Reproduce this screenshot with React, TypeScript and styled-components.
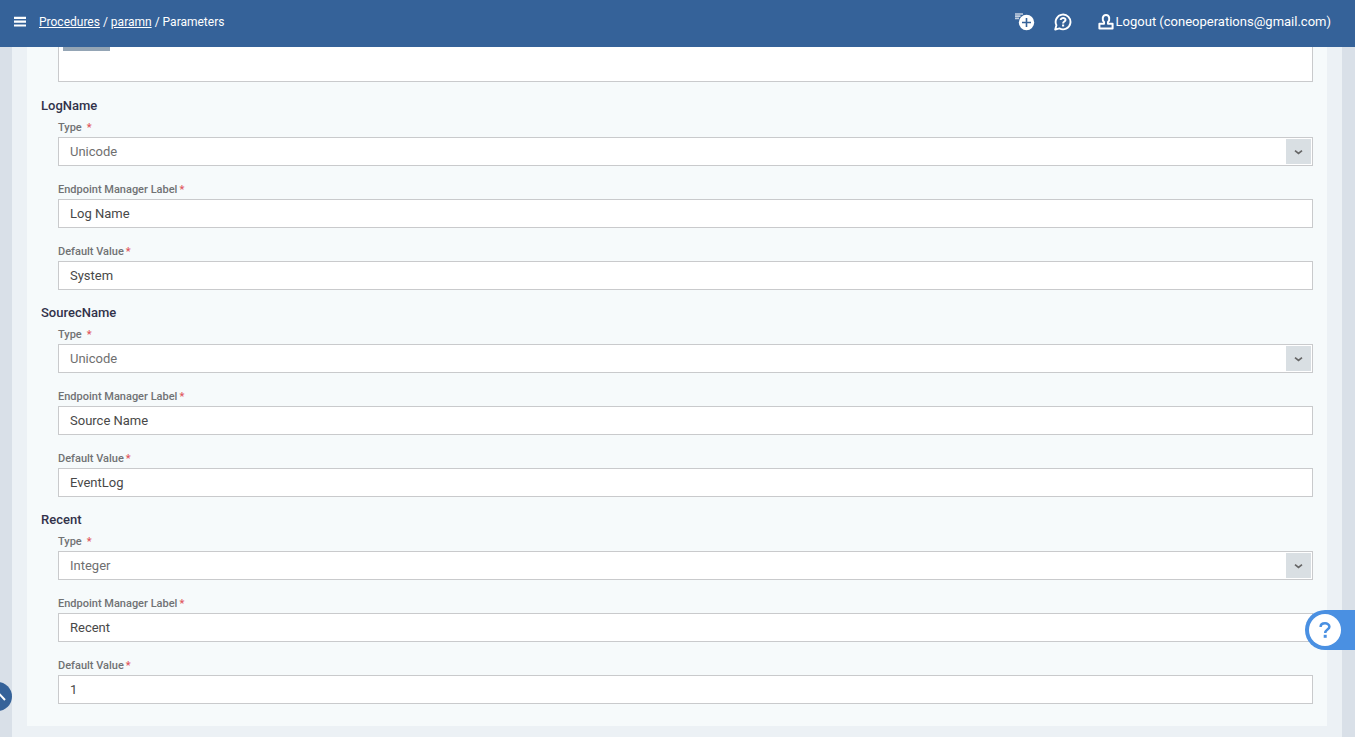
import React from "react";
import styled, { createGlobalStyle } from "styled-components";

const GlobalStyle = createGlobalStyle`
  * { box-sizing: border-box; }
  html, body { margin: 0; padding: 0; }
  body {
    background: #d9e0e8;
    font-family: Roboto, "Liberation Sans", sans-serif;
    font-size: 13px;
    color: #555;
  }
`;

const Page = styled.div`
  min-height: 100vh;
  display: flex;
  flex-direction: column;
`;

const Header = styled.header`
  position: sticky;
  top: 0;
  z-index: 2;
  display: flex;
  align-items: center;
  height: 47px;
  padding: 0 24px 4px 14px;
  background: #356299;
  color: #fff;
`;

const IconButton = styled.button`
  display: flex;
  padding: 0;
  border: 0;
  background: none;
  color: inherit;
  cursor: pointer;
`;

const Breadcrumb = styled.nav`
  display: flex;
  flex: 1;
  gap: 3px;
  margin-left: 13px;
  font-size: 12px;
  line-height: 16px;
`;

const CrumbLink = styled.a`
  color: inherit;
  text-decoration: underline;
`;

const Actions = styled.div`
  display: flex;
  align-items: center;
  gap: 19px;
`;

const Logout = styled.a`
  display: flex;
  align-items: center;
  gap: 2px;
  margin-left: 7px;
  color: inherit;
  font-size: 13px;
  line-height: 16px;
  text-decoration: none;
`;

const Content = styled.main`
  flex: 1;
  margin: 0 13px 0 12px;
  padding: 0 15px 11px;
  background: #ecf1f5;
`;

const Card = styled.form`
  padding: 0 14px 7px;
  background: #f6fafb;
`;

const TagBox = styled.div`
  height: 35px;
  margin: 0 0 16px 17px;
  padding-left: 4px;
  border: 1px solid #c9cacc;
  border-top: 0;
  background: #fff;
`;

const Tag = styled.div`
  width: 47px;
  height: 4px;
  background: #94a5b5;
`;

const Group = styled.section`
  display: flex;
  flex-direction: column;
`;

const GroupTitle = styled.h2`
  margin: 0 0 5px;
  font-size: 13px;
  font-weight: 500;
  line-height: 16px;
  color: #32324a;
`;

const Field = styled.div`
  margin: 0 0 15px 17px;
`;

const Label = styled.label<{ $gap?: boolean }>`
  display: flex;
  gap: ${(p) => (p.$gap ? 5 : 2)}px;
  font-size: 11px;
  font-weight: 500;
  line-height: 18px;
  color: #707274;
`;

const Required = styled.span`
  color: #e0565b;
`;

const Input = styled.input`
  display: block;
  width: 100%;
  height: 29px;
  padding: 0 11px;
  border: 1px solid #c9cacc;
  border-radius: 0;
  background: #fff;
  color: #484848;
  font: inherit;
  outline: 0;
`;

const SelectWrap = styled.div`
  position: relative;
`;

const Select = styled(Input).attrs({ as: "select" })`
  appearance: none;
  color: #6f6f6f;
`;

const SelectArrow = styled.span`
  position: absolute;
  top: 2px;
  right: 2px;
  bottom: 2px;
  display: flex;
  align-items: center;
  justify-content: center;
  width: 25px;
  background: #d9dfe3;
  pointer-events: none;
`;

const HelpTab = styled.button`
  position: fixed;
  right: 0;
  bottom: 87px;
  z-index: 3;
  width: 50px;
  height: 40px;
  padding: 4px;
  border: 0;
  border-radius: 20px 0 0 20px;
  background: #4a90e2;
  cursor: pointer;
`;

const HelpDisc = styled.span`
  display: flex;
  align-items: center;
  justify-content: center;
  width: 32px;
  height: 32px;
  border-radius: 50%;
  background: #fff;
`;

const SideToggle = styled.button`
  position: fixed;
  left: -17px;
  bottom: 26px;
  z-index: 3;
  display: flex;
  align-items: center;
  justify-content: flex-end;
  width: 29px;
  height: 29px;
  padding: 0 6px 0 0;
  border: 0;
  border-radius: 50%;
  background: #356299;
  cursor: pointer;
`;

const MenuIcon = () => (
  <svg width="12" height="11" viewBox="0 0 12 11" fill="currentColor" aria-hidden="true">
    <path d="M0 .8h12v2.2H0zM0 4.6h12v2.2H0zM0 8.4h12v2.2H0z" />
  </svg>
);

const AddIcon = () => (
  <svg width="20" height="18" viewBox="0 0 20 18" aria-hidden="true">
    <path d="M0 1h8M0 3.2h5.5M0 5.4h4" stroke="#c3d0e1" strokeWidth="1.7" />
    <circle cx="11.5" cy="9.5" r="7.7" fill="#fff" />
    <path d="M11.5 5v9M7 9.5h9" stroke="#356299" strokeWidth="1.6" />
  </svg>
);

const SupportIcon = () => (
  <svg width="18" height="18" viewBox="0 0 18 18" fill="none" stroke="#fff" aria-hidden="true">
    <path d="M1.2 16.6L2.4 12.2A7.4 7.4 0 1 1 5.4 15.4Z" strokeWidth="1.9" strokeLinejoin="round" />
    <path d="M6.7 7C6.7 4.2 11.7 4.3 11.5 7C11.4 8.6 9.1 8.4 9.1 10.4" strokeWidth="2" />
    <path d="M9.1 11.5v2" strokeWidth="2.1" />
  </svg>
);

const UserIcon = () => (
  <svg width="16" height="17" viewBox="0 0 16 17" fill="none" stroke="#fff" strokeWidth="2" aria-hidden="true">
    <path d="M6 9C4.2 7.6 3.9 2 8 2S11.8 7.6 10 9V10.8H14.6V15.4H1.4V10.8H6Z" strokeLinejoin="round" />
  </svg>
);

const ChevronDown = () => (
  <svg width="9" height="6" viewBox="0 0 9 6" fill="none" stroke="#666" strokeWidth="1.7" aria-hidden="true">
    <path d="M1 1.6l3.5 2.8L8 1.6" />
  </svg>
);

const groups = [
  { name: "LogName", type: "Unicode", label: "Log Name", value: "System" },
  { name: "SourecName", type: "Unicode", label: "Source Name", value: "EventLog" },
  { name: "Recent", type: "Integer", label: "Recent", value: "1" },
];

export default function App() {
  return (
    <Page>
      <GlobalStyle />
      <Header>
        <IconButton type="button" aria-label="Menu">
          <MenuIcon />
        </IconButton>
        <Breadcrumb aria-label="Breadcrumb">
          <CrumbLink href="#procedures">Procedures</CrumbLink>
          <span>/</span>
          <CrumbLink href="#paramn">paramn</CrumbLink>
          <span>/</span>
          <span>Parameters</span>
        </Breadcrumb>
        <Actions>
          <IconButton type="button" aria-label="Add">
            <AddIcon />
          </IconButton>
          <IconButton type="button" aria-label="Support">
            <SupportIcon />
          </IconButton>
          <Logout href="#logout">
            <UserIcon />
            Logout (coneoperations@gmail.com)
          </Logout>
        </Actions>
      </Header>
      <Content>
        <Card>
          <TagBox>
            <Tag />
          </TagBox>
          {groups.map((g) => (
            <Group key={g.name}>
              <GroupTitle>{g.name}</GroupTitle>
              <Field>
                <Label htmlFor={`${g.name}-type`} $gap>
                  Type <Required>*</Required>
                </Label>
                <SelectWrap>
                  <Select id={`${g.name}-type`} defaultValue={g.type}>
                    <option>Unicode</option>
                    <option>Integer</option>
                  </Select>
                  <SelectArrow>
                    <ChevronDown />
                  </SelectArrow>
                </SelectWrap>
              </Field>
              <Field>
                <Label htmlFor={`${g.name}-label`}>
                  Endpoint Manager Label <Required>*</Required>
                </Label>
                <Input id={`${g.name}-label`} defaultValue={g.label} />
              </Field>
              <Field>
                <Label htmlFor={`${g.name}-value`}>
                  Default Value <Required>*</Required>
                </Label>
                <Input id={`${g.name}-value`} defaultValue={g.value} />
              </Field>
            </Group>
          ))}
        </Card>
      </Content>
      <HelpTab type="button" aria-label="Help">
        <HelpDisc>
          <svg width="12" height="16" viewBox="0 0 12 16" fill="none" stroke="#4a90e2" strokeWidth="2.5" aria-hidden="true">
            <path d="M1.6 5C1.6 .2 10.4 .2 10.4 4.7C10.4 7.5 6.2 7.5 6.2 11" />
            <path d="M6.2 12.8v3" strokeWidth="3" />
          </svg>
        </HelpDisc>
      </HelpTab>
      <SideToggle type="button" aria-label="Expand sidebar">
        <svg width="12" height="8" viewBox="0 0 12 8" fill="none" stroke="#fff" strokeWidth="2" aria-hidden="true">
          <path d="M1 7l5-5.4L11 7" />
        </svg>
      </SideToggle>
    </Page>
  );
}
